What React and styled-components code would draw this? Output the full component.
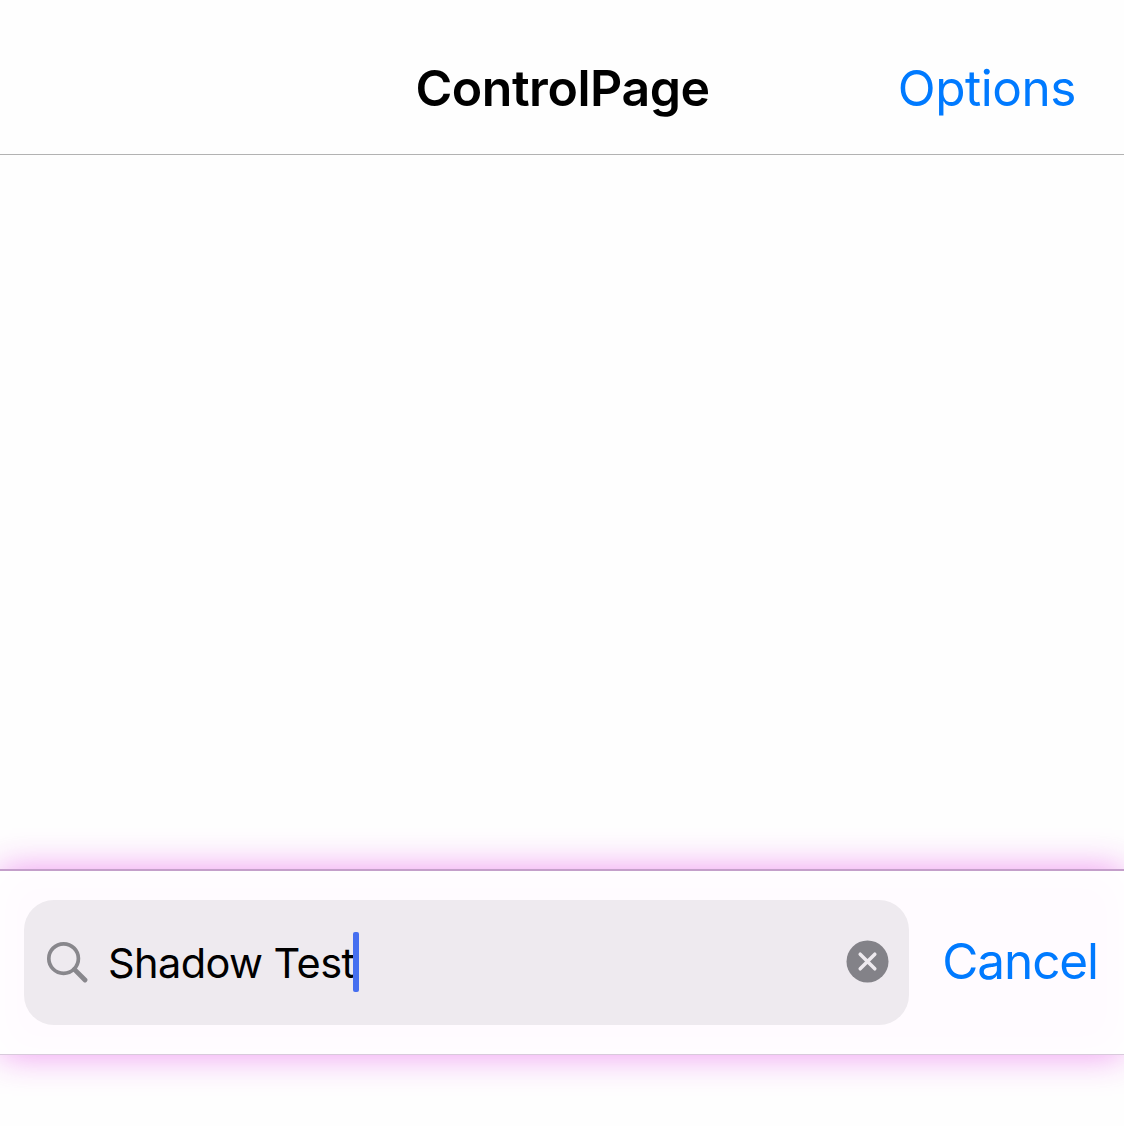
import React from "react";
import styled, { createGlobalStyle } from "styled-components";

const GlobalStyle = createGlobalStyle`
  * { box-sizing: border-box; }
  body {
    margin: 0;
    background: #fefefe;
    font-family: Inter, "Liberation Sans", sans-serif;
  }
  button {
    border: 0;
    padding: 0;
    background: none;
    font-family: inherit;
  }
`;

const Page = styled.main`
  width: 1124px;
  height: 1126px;
  display: flex;
  flex-direction: column;
  overflow: hidden;
`;

const NavigationBar = styled.header`
  height: 155px;
  flex: none;
  display: grid;
  grid-template-columns: 1fr auto 1fr;
  align-items: center;
  padding: 22px 48px 0 49px;
  background: #fefefe;
  border-bottom: 1px solid #b2b2b2;
`;

const Title = styled.h1`
  grid-column: 2;
  margin: 0;
  padding-bottom: 1px;
  font-size: 50px;
  line-height: 60px;
  font-weight: 600;
  letter-spacing: -0.45px;
  color: #000;
`;

const TextButton = styled.button`
  justify-self: end;
  flex: none;
  font-size: 49.5px;
  line-height: 60px;
  letter-spacing: ${(p) => p.$tracking};
  white-space: nowrap;
  color: #007aff;
`;

const Content = styled.section`
  height: 714px;
  flex: none;
`;

const SearchBar = styled.section`
  height: 186px;
  flex: none;
  display: flex;
  align-items: center;
  justify-content: space-between;
  padding: 0 26px 1px 24px;
  border-top: 2px solid #c49fca;
  border-bottom: 1px solid #d8cadb;
  background: #fffbff;
  box-shadow: 0 0 34px rgba(220, 30, 225, 0.47), inset 0 0 40px #fff;

  > ${TextButton} {
    padding-bottom: 3px;
  }
`;

const SearchField = styled.div`
  width: 885px;
  height: 125px;
  display: flex;
  align-items: center;
  padding: 0 20.5px 0 22px;
  border-radius: 30px;
  background: #eeeaef;
`;

const SearchIcon = styled.svg`
  width: 42px;
  height: 42px;
  flex: none;
  margin-right: 20px;
`;

const Query = styled.span`
  padding-top: 1px;
  font-size: 41.5px;
  line-height: 60px;
  letter-spacing: -0.58px;
  white-space: pre;
  color: #000;
`;

const Caret = styled.i`
  width: 6px;
  height: 60px;
  flex: none;
  margin-left: -2px;
  border-radius: 2px;
  background: #466ff0;
`;

const ClearButton = styled.button`
  width: 43px;
  height: 44px;
  margin-left: auto;
  display: flex;
`;

export default function App() {
  return (
    <Page>
      <GlobalStyle />
      <NavigationBar>
        <Title>ControlPage</Title>
        <TextButton $tracking="-0.45px">Options</TextButton>
      </NavigationBar>
      <Content />
      <SearchBar>
        <SearchField>
          <SearchIcon viewBox="0 0 42 42" fill="none" stroke="#88878c" strokeLinecap="round">
            <circle cx="17.6" cy="17.6" r="14.8" strokeWidth="3.7" />
            <path d="M28.4 28.4 39 39" strokeWidth="4.8" />
          </SearchIcon>
          <Query>Shadow Test</Query>
          <Caret />
          <ClearButton aria-label="Clear">
            <svg width="43" height="43" viewBox="0 0 43 43">
              <circle cx="21.5" cy="21.5" r="21" fill="#838288" />
              <path d="m14.2 14.2 14.6 14.6m0-14.6L14.2 28.8" stroke="#eeeaef" strokeWidth="3.5" strokeLinecap="round" />
            </svg>
          </ClearButton>
        </SearchField>
        <TextButton $tracking="-1.1px">Cancel</TextButton>
      </SearchBar>
    </Page>
  );
}
